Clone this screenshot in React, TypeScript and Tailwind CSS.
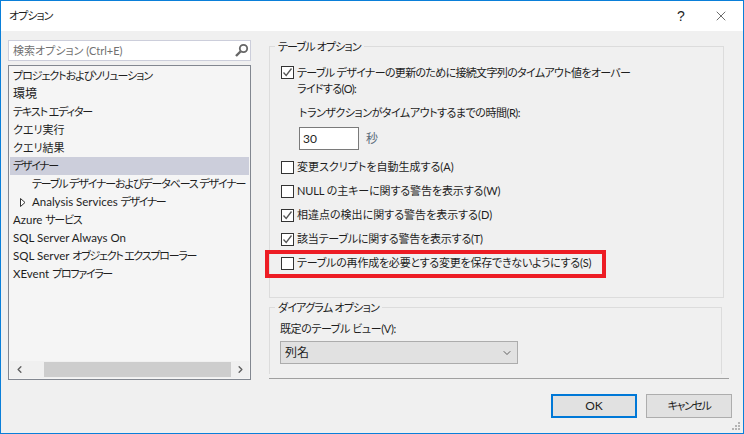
import React from 'react';
import { ChevronDown, ChevronLeft, ChevronRight, X } from 'lucide-react';

const treeItems = [
  { label: <span className="tracking-[-1.05px]">プロジェクトおよびソリューション</span> },
  { label: <span className="text-[12px]">環境</span> },
  { label: <span className="tracking-[-1.1px]">テキスト エディター</span> },
  { label: 'クエリ実行' },
  { label: 'クエリ結果' },
  { label: <span className="tracking-[-1.4px]">デザイナー</span>, selected: true },
  { label: <span className="tracking-[-1.15px]">テーブル デザイナーおよびデータベース デザイナー</span>, indent: true },
  {
    label: (
      <>
        <span className="text-[11.5px]">Analysis Services </span>
        <span className="tracking-[-1.4px]">デザイナー</span>
      </>
    ),
    indent: true,
    arrow: true,
  },
  {
    label: (
      <>
        <span className="text-[11.5px]">Azure </span>
        <span className="tracking-[-1.3px]">サービス</span>
      </>
    ),
  },
  { label: <span className="text-[11.5px]">SQL Server Always On</span> },
  {
    label: (
      <>
        <span className="text-[11.5px]">SQL Server </span>
        <span className="tracking-[-1.25px]">オブジェクト エクスプローラー</span>
      </>
    ),
  },
  {
    label: (
      <>
        <span className="text-[11.5px]">XEvent </span>
        <span className="tracking-[-1.3px]">プロファイラー</span>
      </>
    ),
  },
];

function Checkbox({ checked }: { checked?: boolean }) {
  return (
    <span className="flex h-[13px] w-[13px] shrink-0 items-center justify-center border border-[#333] bg-white">
      {checked && (
        <svg width="11" height="11" viewBox="0 0 11 11" fill="none">
          <path d="M1.5 5.5 L4.2 8.5 L9.5 1.5" stroke="#555" strokeWidth="1.3" />
        </svg>
      )}
    </span>
  );
}

function Option({ checked, label, className }: { checked?: boolean; label: string; className?: string }) {
  return (
    <div className="flex h-[24px] items-center gap-[3px]">
      <Checkbox checked={checked} />
      <span className={className}>{label}</span>
    </div>
  );
}

export default function App() {
  return (
    <div className="relative flex h-[434px] w-[744px] flex-col overflow-hidden border border-[#0a7fd9] bg-[#f0f0f0] font-['Lato','Noto_Sans_CJK_JP',sans-serif] text-[11px] leading-[18px] text-[#1e1e1e] [font-feature-settings:'palt']">
      {/* Title bar */}
      <div className="flex h-[30px] shrink-0 items-center bg-white pl-[8px]">
        <span className="flex-1 tracking-[-1px]">オプション</span>
        <span className="w-[20px] text-center text-[14px] font-['Liberation_Sans',sans-serif]">?</span>
        <span className="ml-[22px] mr-[14px]">
          <X size={16} strokeWidth={1} className="text-[#222]" />
        </span>
      </div>

      <div className="flex min-h-0 flex-1">
        {/* Left column */}
        <div className="ml-[7px] mt-[9px] flex w-[243px] flex-col">
          <div className="flex h-[21px] items-center border border-[#cccedb] bg-white pl-[4px] pr-[1px] text-[#717171]">
            <span className="flex-1">検索オプション (Ctrl+E)</span>
            <svg width="15" height="15" viewBox="0 0 15 15" fill="none">
              <circle cx="9.5" cy="5.5" r="3.7" stroke="#666" strokeWidth="1.8" />
              <path d="M6.5 8.5 L2 13" stroke="#666" strokeWidth="2.4" />
            </svg>
          </div>
          <div className="mt-[4px] flex h-[315px] flex-col border border-[#828790] bg-[#f5f5f5] p-[1px]">
            <div className="min-h-0 flex-1 overflow-hidden">
              {treeItems.map((item, index) => (
                <div
                  key={index}
                  className={`flex h-[18px] items-center whitespace-pre pl-[3px] ${item.selected ? 'bg-[#cccedb]' : ''}`}
                >
                  {item.indent && (
                    <span className="flex w-[19px] shrink-0 justify-center">
                      {item.arrow && (
                        <svg width="6" height="9" viewBox="0 0 6 9" fill="none">
                          <path d="M0.5 0.5 L5 4.5 L0.5 8.5 Z" stroke="#333" fill="white" />
                        </svg>
                      )}
                    </span>
                  )}
                  <span>{item.label}</span>
                </div>
              ))}
            </div>
            <div className="flex h-[17px] shrink-0 items-center bg-[#f0f0f0]">
              <span className="flex w-[34px] justify-center pr-[16px]">
                <ChevronLeft size={11} strokeWidth={3} className="text-[#606060]" />
              </span>
              <div className="h-[15px] w-[187px] bg-[#cdcdcd]" />
              <span className="flex flex-1 justify-center">
                <ChevronRight size={11} strokeWidth={3} className="text-[#606060]" />
              </span>
            </div>
          </div>
        </div>

        {/* Right column */}
        <div className="ml-[18px] mt-[8px] flex w-[460px] flex-col">
          <fieldset className="h-[259px] w-[455px] border border-[#dcdcdc]">
            <legend className="ml-[5px] px-[3px] pt-[2px] leading-[12px] tracking-[-0.85px]">テーブル オプション</legend>
            <div className="pl-[11px]">
              <div className="mt-[11px] flex items-start gap-[3px]">
                <span className="mt-[2px]">
                  <Checkbox checked />
                </span>
                <span className="leading-[16px] tracking-[-0.67px] pt-[1px]">
                  テーブル デザイナーの更新のために接続文字列のタイムアウト値をオーバー
                  <br />
                  ライドする(O):
                </span>
              </div>
              <div className="ml-[18px] mt-[7px] tracking-[-0.47px]">トランザクションがタイムアウトするまでの時間(R):</div>
              <div className="ml-[18px] mt-[5px] flex items-center gap-[7px]">
                <div className="flex h-[23px] w-[60px] items-center border border-[#7a7a7a] bg-white pl-[3px] text-[12px]">30</div>
                <span className="text-[12px] text-[#5a6b7a]">秒</span>
              </div>
              <div className="mt-[5px] flex flex-col">
                <Option label="変更スクリプトを自動生成する(A)" />
                <Option label="NULL の主キーに関する警告を表示する(W)" className="tracking-[-0.1px]" />
                <Option checked label="相違点の検出に関する警告を表示する(D)" />
                <Option checked label="該当テーブルに関する警告を表示する(T)" className="tracking-[-0.2px]" />
                <Option label="テーブルの再作成を必要とする変更を保存できないようにする(S)" className="tracking-[-0.22px]" />
              </div>
            </div>
          </fieldset>

          <fieldset className="mt-[2px] h-[74px] w-[453px] border border-b-0 border-[#dcdcdc]">
            <legend className="ml-[5px] px-[3px] pt-[2px] leading-[12px] tracking-[-0.75px]">ダイアグラム オプション</legend>
            <div className="pl-[10px]">
              <div className="mt-[6px] tracking-[-0.4px]">既定のテーブル ビュー(V):</div>
              <div className="mt-[3px] flex h-[23px] w-[238px] items-center border border-[#acacac] bg-[#e1e1e1] px-[4px]">
                <span className="flex-1 text-[12px]">列名</span>
                <ChevronDown size={12} strokeWidth={1.5} className="text-[#333]" />
              </div>
            </div>
          </fieldset>

          <div className="mt-[4px] h-[1px] w-[460px] shrink-0 bg-[#a0a0a0]" />

          <div className="mt-[15px] flex w-[463px] justify-end gap-[9px]">
            <button className="h-[24px] w-[86px] border-2 border-[#0078d7] bg-[#e1e1e1] text-[12px]">OK</button>
            <button className="h-[24px] w-[86px] border border-[#adadad] bg-[#e1e1e1] tracking-[-1.4px]">キャンセル</button>
          </div>
        </div>
      </div>

      {/* Red callout drawn on top of the screenshot */}
      <div className="absolute left-[264px] top-[249px] h-[28px] w-[341px] border-[4px] border-[#ed1c24]" />

      {/* Resize grip */}
      <svg className="absolute bottom-[2px] right-[2px]" width="9" height="9" viewBox="0 0 9 9" fill="#b4b4b4">
        <rect x="6" y="0" width="2" height="2" />
        <rect x="3" y="3" width="2" height="2" />
        <rect x="6" y="3" width="2" height="2" />
        <rect x="0" y="6" width="2" height="2" />
        <rect x="3" y="6" width="2" height="2" />
        <rect x="6" y="6" width="2" height="2" />
      </svg>
    </div>
  );
}
